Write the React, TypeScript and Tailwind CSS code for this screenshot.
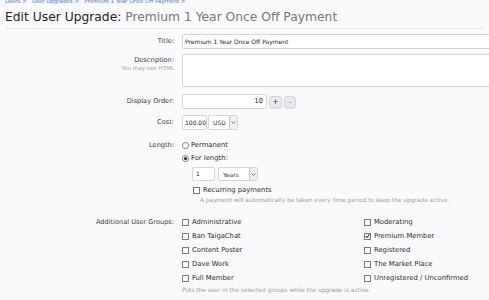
import React from "react";

const font = { fontFamily: '"DejaVu Sans", Tahoma, Verdana, sans-serif' };

const Check: React.FC<{ checked?: boolean; label: string; h?: string }> = ({ checked, label, h }) => (
  <label className={"flex items-center gap-[3px] text-[6.8px] text-[#2a2a2a] " + (h ?? "h-[14px]")}>
    <span className="flex h-[7px] w-[7px] shrink-0 items-center justify-center border border-[#7c7c7c] bg-white">
      {checked && (
        <svg width="6" height="6" viewBox="0 0 6 6">
          <path d="M0.8 3 L2.4 5 L5.4 0.6" stroke="#222" strokeWidth="1.2" fill="none" />
        </svg>
      )}
    </span>
    <span className="whitespace-nowrap">{label}</span>
  </label>
);

const Radio: React.FC<{ checked?: boolean; label: string }> = ({ checked, label }) => (
  <label className="flex h-[12px] items-center gap-[2px] text-[6.8px] text-[#2a2a2a]">
    <span className="flex h-[7px] w-[7px] shrink-0 items-center justify-center rounded-full border border-[#7c7c7c] bg-white">
      {checked && <span className="h-[3px] w-[3px] rounded-full bg-[#222]" />}
    </span>
    <span className="whitespace-nowrap">{label}</span>
  </label>
);

const Row: React.FC<{ label: string; hint?: string; children: React.ReactNode; className?: string; labelClass?: string }> = ({
  label,
  hint,
  children,
  className,
  labelClass,
}) => (
  <div className={"flex " + (className ?? "")}>
    <div className={"w-[174px] shrink-0 text-right " + (labelClass ?? "")}>
      <div className="whitespace-nowrap text-[6.6px] text-[#3a3a3a]">{label}</div>
      {hint && <div className="whitespace-nowrap text-[5.6px] leading-[8px] text-[#a4a4a8]">{hint}</div>}
    </div>
    <div className="ml-[8px] min-w-0 flex-1">{children}</div>
  </div>
);

const Select: React.FC<{ value: string; width: string; h: string }> = ({ value, width, h }) => (
  <div className={"flex items-stretch justify-between rounded-[2px] border border-[#d4d4d8] bg-white pl-[4px] text-[6px] text-[#333] " + width + " " + h}>
    <span className="self-center">{value}</span>
    <span className="flex w-[8px] items-center justify-center border-l border-[#c8c8cc] bg-[#f0f0f2]">
      <svg width="5" height="3" viewBox="0 0 5 3">
        <path d="M0.5 0.5 L2.5 2.5 L4.5 0.5" stroke="#666" strokeWidth="0.9" fill="none" />
      </svg>
    </span>
  </div>
);

const groupsLeft = ["Administrative", "Ban TaigaChat", "Content Poster", "Dave Work", "Full Member"];
const groupsRight = ["Moderating", "Premium Member", "Registered", "The Market Place", "Unregistered / Unconfirmed"];

export default function App() {
  return (
    <div className="h-[300px] w-[489px] overflow-hidden bg-[#fafafc]" style={font}>
      <div className="-mt-[3px] h-[8px] whitespace-nowrap px-[5px] text-[5.5px] leading-[8px] text-[#4a78bd]">
        Users &gt;&nbsp;&nbsp; User Upgrades &gt;&nbsp;&nbsp; Premium 1 Year Once Off Payment &gt;
      </div>
      <h1 className="mt-[4px] whitespace-nowrap px-[5px] text-[12.3px] leading-[16px] text-[#222]">
        Edit User Upgrade: <span className="text-[#777]">Premium 1 Year Once Off Payment</span>
      </h1>
      <div className="mx-[5px] mt-[3px] border-b border-[#e8e8ec]" />

      <div className="mt-[5px] flex flex-col">
        <Row label="Title:" labelClass="leading-[15px]">
          <div className="-mr-[20px] h-[15px] whitespace-nowrap rounded-[2px] border border-[#d4d4d8] bg-white pl-[2px] text-[6px] leading-[13px] text-[#222]">
            Premium 1 Year Once Off Payment
          </div>
        </Row>

        <Row label="Description:" hint="You may use HTML" className="mt-[5px]" labelClass="pt-[2px] leading-[8px]">
          <div className="-mr-[20px] h-[33px] rounded-[2px] border border-[#d4d4d8] bg-white" />
        </Row>

        <Row label="Display Order:" className="mt-[7px]" labelClass="leading-[15px]">
          <div className="flex h-[15px] items-center gap-[2px]">
            <div className="h-[15px] w-[85px] rounded-[2px] border border-[#d4d4d8] bg-white pr-[3px] text-right text-[6.6px] leading-[13px] text-[#222]">
              10
            </div>
            <button className="h-[12px] w-[13px] rounded-[3px] border border-[#d3d6de] bg-[#e8eaf0] text-[7px] leading-[10px] text-[#333] shadow-[0_1px_1px_rgba(0,0,0,0.1)]">
              +
            </button>
            <button className="h-[12px] w-[12px] rounded-[3px] border border-[#d3d6de] bg-[#e8eaf0] text-[7px] leading-[10px] text-[#333] shadow-[0_1px_1px_rgba(0,0,0,0.1)]">
              -
            </button>
          </div>
        </Row>

        <Row label="Cost:" className="mt-[6px]" labelClass="leading-[15px]">
          <div className="flex items-center gap-[1px]">
            <div className="h-[15px] w-[25px] overflow-hidden whitespace-nowrap rounded-[2px] border border-[#d4d4d8] bg-white pl-[2px] text-[6px] leading-[13px] text-[#222]">
              100.00
            </div>
            <Select value="USD" width="w-[30px]" h="h-[15px]" />
          </div>
        </Row>

        <Row label="Length:" className="mt-[9px]" labelClass="leading-[12px]">
          <Radio label="Permanent" />
          <div className="mt-[1px]">
            <Radio checked label="For length:" />
          </div>
          <div className="ml-[10px] mt-[3px] flex items-center gap-[3px]">
            <div className="h-[14px] w-[23px] rounded-[2px] border border-[#d4d4d8] bg-white pl-[3px] text-[6px] leading-[12px] text-[#222]">
              1
            </div>
            <Select value="Years" width="w-[40px]" h="h-[14px]" />
          </div>
          <div className="ml-[11px] mt-[3px]">
            <Check label="Recurring payments" h="h-[12px]" />
            <div className="ml-[7px] whitespace-nowrap text-[5.85px] leading-[8px] text-[#9a9a9e]">
              A payment will automatically be taken every time period to keep the upgrade active.
            </div>
          </div>
        </Row>

        <Row label="Additional User Groups:" className="mt-[11px]" labelClass="leading-[14px]">
          <div className="grid grid-cols-[182px_1fr]">
            <div className="flex flex-col">
              {groupsLeft.map((g) => (
                <Check key={g} label={g} />
              ))}
            </div>
            <div className="flex flex-col">
              {groupsRight.map((g) => (
                <Check key={g} label={g} checked={g === "Premium Member"} />
              ))}
            </div>
          </div>
          <div className="whitespace-nowrap text-[5.85px] leading-[10px] text-[#9a9a9e]">
            Puts the user in the selected groups while the upgrade is active.
          </div>
        </Row>
      </div>
    </div>
  );
}
